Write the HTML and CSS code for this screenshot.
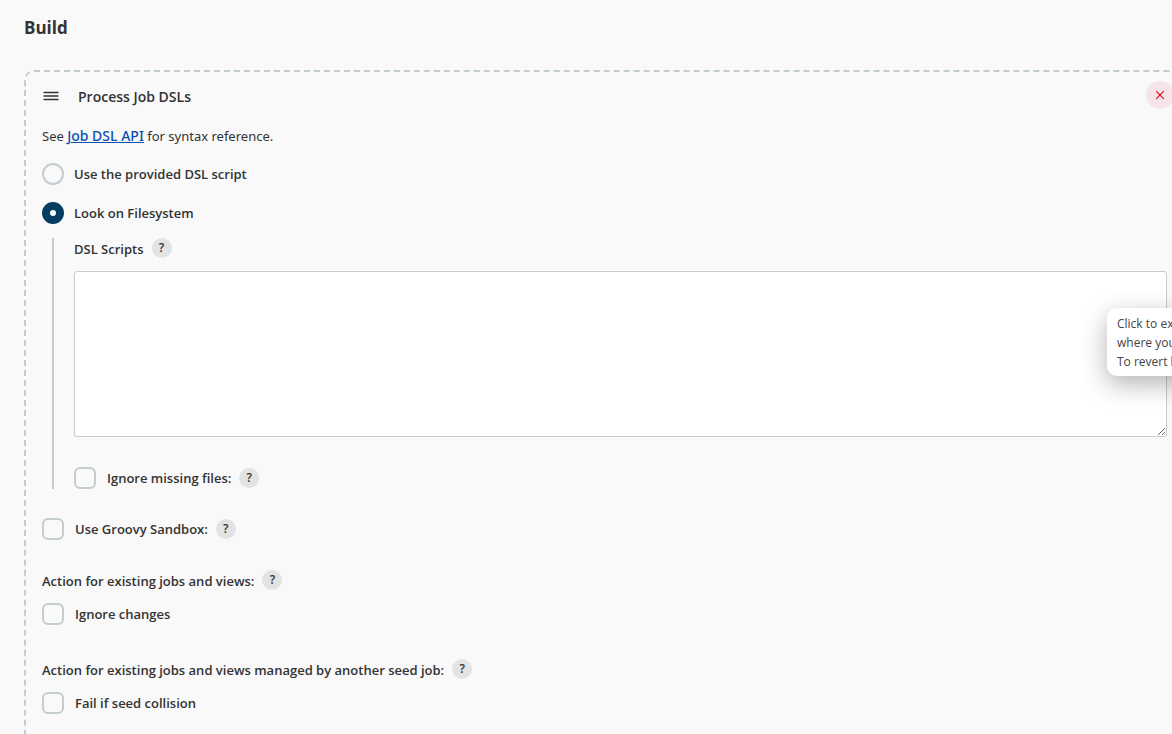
FILE: index.html
```html
<!DOCTYPE html>
<html lang="en">
<head>
<meta charset="utf-8">
<title>Build</title>
<link rel="stylesheet" href="styles.css">
</head>
<body>
<main class="page">
  <h1 class="section-title">Build</h1>
  <form class="step">
    <header class="step-header">
      <svg class="handle" width="18" height="16" viewBox="0 0 18 16" stroke="#333" stroke-width="1.3" stroke-linecap="round" aria-hidden="true"><path d="M2 5.5h14M2 9h14M2 12.5h14"/></svg>
      <h2 class="step-title">Process Job DSLs</h2>
      <button class="remove" type="button" aria-label="Remove"><svg width="10" height="10" viewBox="0 0 10 10" stroke="#d9001b" stroke-width="1.1"><path d="M1.2 1.2l7.6 7.6M8.8 1.2l-7.6 7.6"/></svg></button>
    </header>
    <p class="intro">See <a href="#">Job DSL API</a> for syntax reference.</p>
    <div class="choice"><input class="radio" type="radio" name="source" id="provided"><label for="provided">Use the provided DSL script</label></div>
    <div class="choice"><input class="radio" type="radio" name="source" id="filesystem" checked><label for="filesystem">Look on Filesystem</label></div>
    <div class="nested">
      <div class="caption"><label for="scripts">DSL Scripts</label><button class="help" type="button">?</button></div>
      <div class="editor">
        <textarea class="scripts" id="scripts"></textarea>
        <div class="tooltip" role="tooltip">Click to expand<br>where you<br>To revert back</div>
      </div>
      <div class="option option-nested"><input class="check" type="checkbox" id="missing"><label for="missing">Ignore missing files:</label><button class="help" type="button">?</button></div>
    </div>
    <div class="option option-main"><input class="check" type="checkbox" id="sandbox"><label for="sandbox">Use Groovy Sandbox:</label><button class="help" type="button">?</button></div>
    <section class="group">
      <div class="caption"><span>Action for existing jobs and views:</span><button class="help" type="button">?</button></div>
      <div class="option"><input class="check" type="checkbox" id="ignore"><label for="ignore">Ignore changes</label></div>
    </section>
    <section class="group">
      <div class="caption"><span>Action for existing jobs and views managed by another seed job:</span><button class="help" type="button">?</button></div>
      <div class="option"><input class="check" type="checkbox" id="collision"><label for="collision">Fail if seed collision</label></div>
    </section>
  </form>
</main>
</body>
</html>
```
FILE: styles.css
```css
* { box-sizing: border-box; }
html { height: 100%; overflow: hidden; }
body {
  height: 100%;
  margin: 0;
  overflow: hidden;
  background: #f9f9f9;
  color: #333;
  font: 600 13px/20px "Open Sans", "Noto Sans", sans-serif;
}
.page { padding: 16px 0 0 24px; }
.section-title { margin: 0 0 30px; font-size: 17px; line-height: 24px; font-weight: 700; }
.step {
  margin-right: -13px;
  padding: 9px 16px 0;
  border: 2px dashed #c3ccd1;
  border-radius: 10px;
}
.step-header { display: flex; align-items: center; height: 28px; }
.handle { flex: none; margin-right: 18px; }
.step-title { flex: 1; margin: 4px 0 0; font-size: 14px; line-height: 20px; font-weight: 600; }
.remove {
  display: flex;
  align-items: center;
  justify-content: center;
  width: 28px;
  height: 28px;
  margin-right: -7px;
  padding: 0;
  border: 0;
  border-radius: 50%;
  background: #f6e5e8;
}
.intro { margin: 17px 0; font-family: "Noto Sans", "Open Sans", sans-serif; font-size: 13px; font-weight: 400; }
.intro a { color: #0b4eb3; font-weight: 500; font-size: 14px; }
.choice { display: flex; align-items: center; gap: 10px; height: 22px; margin-bottom: 17px; }
.radio, .check {
  appearance: none;
  flex: none;
  width: 22px;
  height: 22px;
  margin: 0;
  border: 2px solid #c3ccd1;
  background: #f9f9f9;
}
.radio { border-radius: 50%; }
.radio:checked { border: 8px solid #043f63; background: #fff; }
.check { border-radius: 6px; }
.nested {
  margin: -3px 0 0 10px;
  padding-left: 20px;
  border-left: 2px solid #c3ccd1;
}
.caption { display: flex; align-items: center; gap: 8px; height: 20px; margin-bottom: 13px; }
.caption > :first-child { margin-top: 2px; }
.help {
  width: 20px;
  height: 20px;
  padding: 0;
  border: 0;
  border-radius: 50%;
  background: #e3e3e3;
  color: #333;
  font: 600 12px/20px "Open Sans", "Noto Sans", sans-serif;
}
.editor { position: relative; }
.scripts {
  display: block;
  width: 100%;
  height: 166px;
  padding: 8px;
  border: 1px solid #c3ccd1;
  border-radius: 3px;
  background: #fff;
  resize: vertical;
}
.tooltip {
  position: absolute;
  top: 37px;
  left: calc(100% - 60px);
  padding: 6px 10px 5px;
  border-radius: 10px;
  background: #fff;
  box-shadow: 0 8px 26px rgba(0, 0, 0, .3);
  color: #444;
  font-size: 12px;
  line-height: 19px;
  font-weight: 400;
  white-space: nowrap;
}
.option { display: flex; align-items: center; height: 22px; }
.option label { margin: 0 8px 0 11px; }
.option-nested { margin-top: 30px; }
.option-main { margin: 29px 0 30px; }
.group { margin-bottom: 34px; }
```
